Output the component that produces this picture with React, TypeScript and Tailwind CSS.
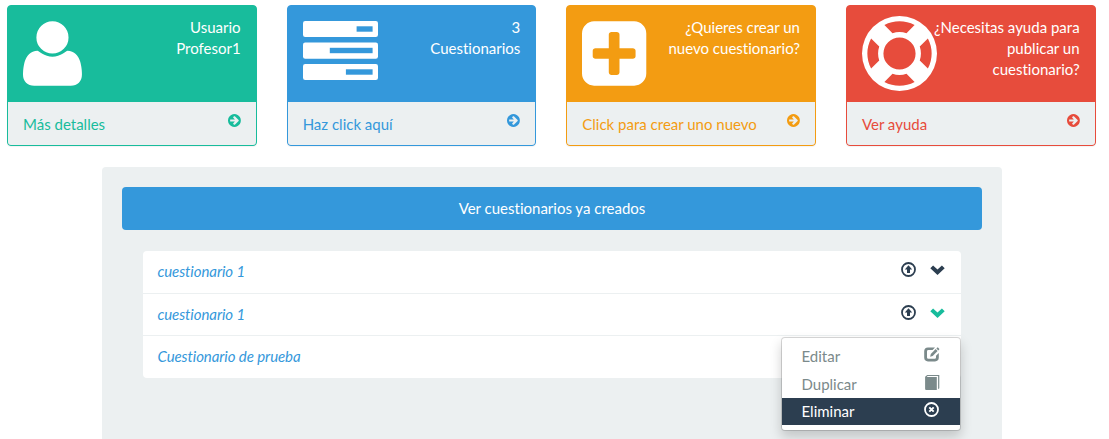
import type { ReactNode } from "react";

const USER =
  "M1600 1405q0 120-73 189.5t-194 69.5h-874q-121 0-194-69.5t-73-189.5q0-53 3.5-103.5t14-109 26.5-108.5 43-97.5 62-81 85.5-53.5 111.5-20q9 0 42 21.5t74.5 48 108 48 133.5 21.5 133.5-21.5 108-48 74.5-48 42-21.5q61 0 111.5 20t85.5 53.5 62 81 43 97.5 26.5 108.5 14 109 3.5 103.5zm-320-893q0 159-112.5 271.5t-271.5 112.5-271.5-112.5-112.5-271.5 112.5-271.5 271.5-112.5 271.5 112.5 112.5 271.5z";
const PLUS =
  "M1408 960v-128q0-26-19-45t-45-19h-320v-320q0-26-19-45t-45-19h-128q-26 0-45 19t-19 45v320h-320q-26 0-45 19t-19 45v128q0 26 19 45t45 19h320v320q0 26 19 45t45 19h128q26 0 45-19t19-45v-320h320q26 0 45-19t19-45zm256-544v960q0 119-84.5 203.5t-203.5 84.5h-960q-119 0-203.5-84.5t-84.5-203.5v-960q0-119 84.5-203.5t203.5-84.5h960q119 0 203.5 84.5t84.5 203.5z";
const RING =
  "M896 0q182 0 348 71t286 191 191 286 71 348-71 348-191 286-286 191-348 71-348-71-286-191-191-286-71-348 71-348 191-286 286-191 348-71zm0 128q-190 0-361 90l194 194q82-28 167-28t167 28l194-194q-171-90-361-90zm-678 1129l194-194q-28-82-28-167t28-167l-194-194q-90 171-90 361t90 361zm678 407q190 0 361-90l-194-194q-82 28-167 28t-167-28l-194 194q171 90 361 90zm0-384q159 0 271.5-112.5t112.5-271.5-112.5-271.5-271.5-112.5-271.5 112.5-112.5 271.5 112.5 271.5 271.5 112.5zm484-217l194 194q90-171 90-361t-90-361l-194 194q28 82 28 167t-28 167z";
const ARROW =
  "M1413 896q0-27-18-45l-91-91-362-362q-18-18-45-18t-45 18l-91 91q-18 18-18 45t18 45l189 189h-502q-26 0-45 19t-19 45v128q0 26 19 45t45 19h502l-189 189q-18 18-18 45t18 45l91 91q18 18 45 18t45-18l362-362 91-91q18-18 18-45zm251 0q0 209-103 385.5t-279.5 279.5-385.5 103-385.5-103-279.5-279.5-103-385.5 103-385.5 279.5-279.5 385.5-103 385.5 103 279.5 279.5 103 385.5z";

function Glyph({ d, box, className }: { d: string; box: string; className: string }) {
  return (
    <svg viewBox={box} className={className} fill="currentColor" fillRule="evenodd">
      <path d={d} />
    </svg>
  );
}

function TasksIcon() {
  return (
    <svg viewBox="0 0 75 75" className="h-[75px] w-[75px] shrink-0">
      <g fill="#fff">
        <rect x="0" y="5" width="75" height="16" rx="2.2" />
        <rect x="0" y="26.4" width="75" height="16.3" rx="2.2" />
        <rect x="0" y="48" width="75" height="16" rx="2.2" />
      </g>
      <g fill="#3498db">
        <rect x="53.6" y="10.3" width="16" height="5.4" />
        <rect x="26.8" y="31.8" width="42.8" height="5.4" />
        <rect x="42.9" y="53.3" width="26.7" height="5.4" />
      </g>
    </svg>
  );
}

function UploadIcon() {
  return (
    <svg viewBox="0 0 15 15" className="h-[15px] w-[15px]">
      <circle cx="7.5" cy="7.5" r="6.5" fill="none" stroke="currentColor" strokeWidth="1.8" />
      <path d="M7.5 3.3L11.2 7.5H9V11H6V7.5H3.8Z" fill="currentColor" />
    </svg>
  );
}

function ChevronIcon() {
  return (
    <svg viewBox="0 0 15 10" className="h-[10px] w-[15px]">
      <path d="M0.3 3.3L3.1 0.5L7.5 4.6L11.9 0.5L14.7 3.3L7.5 9.9Z" fill="currentColor" />
    </svg>
  );
}

function EditIcon() {
  return (
    <svg viewBox="0 0 16 15" className="h-[15px] w-4" fill="currentColor">
      <path d="M4 0.4H11L8.6 3H4.4Q3 3 3 4.4V10.4Q3 11.8 4.4 11.8H10.6Q12 11.8 12 10.4V8.8L14.8 6V10.6Q14.8 14.4 11 14.4H4Q0.2 14.4 0.2 10.6V4.2Q0.2 0.4 4 0.4Z" />
      <path d="M11.7 2.1L13.6 4L8.7 9L6.1 9.8L6.8 7Z" />
      <path d="M12.4 1.4L13.2 0.6Q13.6 0.2 14 0.6L15.2 1.8Q15.6 2.2 15.2 2.6L14.3 3.4Z" />
    </svg>
  );
}

function BookIcon() {
  return (
    <svg viewBox="0 0 16 15" className="h-[15px] w-4" fill="currentColor">
      <path d="M3.2 0H15.3V13.2L14.1 14.2V1.1H3.6L2.8 2H12.8V15H2.2Q1.1 15 1.1 14V1.7Z" />
    </svg>
  );
}

function RemoveIcon() {
  return (
    <svg viewBox="0 0 15 15" className="mr-px h-[15px] w-[15px]" fill="none" stroke="currentColor">
      <circle cx="7.5" cy="7.5" r="6.5" strokeWidth="1.8" />
      <path d="M5.3 5.3L9.7 9.7M9.7 5.3L5.3 9.7" strokeWidth="1.9" />
    </svg>
  );
}

type CardProps = { icon: ReactNode; text: ReactNode; link: string; border: string; fill: string; color: string };

function Card({ icon, text, link, border, fill, color }: CardProps) {
  return (
    <div className={`h-[141px] overflow-hidden rounded border shadow-[0_1px_1px_rgba(0,0,0,0.05)] ${border} ${fill}`}>
      <div className="flex h-24 justify-between px-[15px] pt-[10px] text-white">
        {icon}
        <div className="-ml-5 whitespace-nowrap pt-px text-right leading-[21px]">{text}</div>
      </div>
      <div className={`flex h-[43px] justify-between bg-[#ecf0f1] px-[15px] pt-[11px] ${color}`}>
        <span className="pt-px">{link}</span>
        <Glyph d={ARROW} box="128 0 1536 1792" className="h-[15px] w-[12.86px]" />
      </div>
    </div>
  );
}

type RowProps = { name: string; height: string; tone?: string; children?: ReactNode };

function Row({ name, height, tone, children }: RowProps) {
  return (
    <li
      className={`relative flex items-start justify-between border-b border-[#ecf0f1] pl-[14.5px] pr-4 pt-[10px] last:border-b-0 ${height}`}
    >
      <span className="italic tracking-[-0.08px] text-[#3498db]">{name}</span>
      {tone && (
        <span className="flex items-start gap-[14.5px] pt-[1.2px] text-[#2c3e50]">
          <UploadIcon />
          <span className={`pt-[3px] ${tone}`}>
            <ChevronIcon />
          </span>
        </span>
      )}
      {children}
    </li>
  );
}

function MenuItem({ label, icon, tone }: { label: string; icon: ReactNode; tone: string }) {
  return (
    <div className={`flex h-[27.4px] items-start justify-between pl-[19.5px] pr-5 pt-[3px] ${tone}`}>
      <span>{label}</span>
      <span className="pt-px">{icon}</span>
    </div>
  );
}

export default function App() {
  return (
    <div className="h-[439px] overflow-hidden bg-white px-[7px] pt-[5px] font-['Lato',sans-serif] text-[15px] leading-[21.4px] [font-variant-ligatures:none]">
      <div className="grid w-[1088.6px] grid-cols-4 gap-[30px]">
        <Card
          icon={<Glyph d={USER} box="192 0 1408 1792" className="h-[75px] w-[58.93px] shrink-0" />}
          text={<>Usuario<br />Profesor1</>}
          link="Más detalles"
          border="border-[#18bc9c]"
          fill="bg-[#18bc9c]"
          color="text-[#18bc9c]"
        />
        <Card
          icon={<TasksIcon />}
          text={<>3<br />Cuestionarios</>}
          link="Haz click aquí"
          border="border-[#3498db]"
          fill="bg-[#3498db]"
          color="text-[#3498db]"
        />
        <Card
          icon={<Glyph d={PLUS} box="128 0 1536 1792" className="h-[75px] w-[64.29px] shrink-0" />}
          text={<>¿Quieres crear un<br />nuevo cuestionario?</>}
          link="Click para crear uno nuevo"
          border="border-[#f39c12]"
          fill="bg-[#f39c12]"
          color="text-[#f39c12]"
        />
        <Card
          icon={<Glyph d={RING} box="0 0 1792 1792" className="h-[75px] w-[75px] shrink-0" />}
          text={<>¿Necesitas ayuda para<br />publicar un<br />cuestionario?</>}
          link="Ver ayuda"
          border="border-[#e74c3c]"
          fill="bg-[#e74c3c]"
          color="text-[#e74c3c]"
        />
      </div>

      <main className="ml-[95px] mt-[21px] h-[300px] w-[900px] rounded bg-[#ecf0f1] p-5">
        <button className="block h-[43px] w-full rounded bg-[#3498db] text-center text-white">
          Ver cuestionarios ya creados
        </button>
        <ul className="ml-[21px] mt-[21px] w-[818px] rounded bg-white">
          <Row name="cuestionario 1" height="h-[43px]" tone="text-[#2c3e50]" />
          <Row name="cuestionario 1" height="h-[42px]" tone="text-[#18bc9c]" />
          <Row name="Cuestionario de prueba" height="h-[42px]">
            <div className="absolute right-0 top-[1.2px] z-10 w-[180px] rounded border border-black/15 bg-white bg-clip-padding py-[5px] shadow-[0_6px_12px_rgba(0,0,0,0.175)]">
              <MenuItem label="Editar" icon={<EditIcon />} tone="text-[#7b8a8b]" />
              <MenuItem label="Duplicar" icon={<BookIcon />} tone="text-[#7b8a8b]" />
              <MenuItem label="Eliminar" icon={<RemoveIcon />} tone="bg-[#2c3e50] text-white" />
            </div>
          </Row>
        </ul>
      </main>
    </div>
  );
}
